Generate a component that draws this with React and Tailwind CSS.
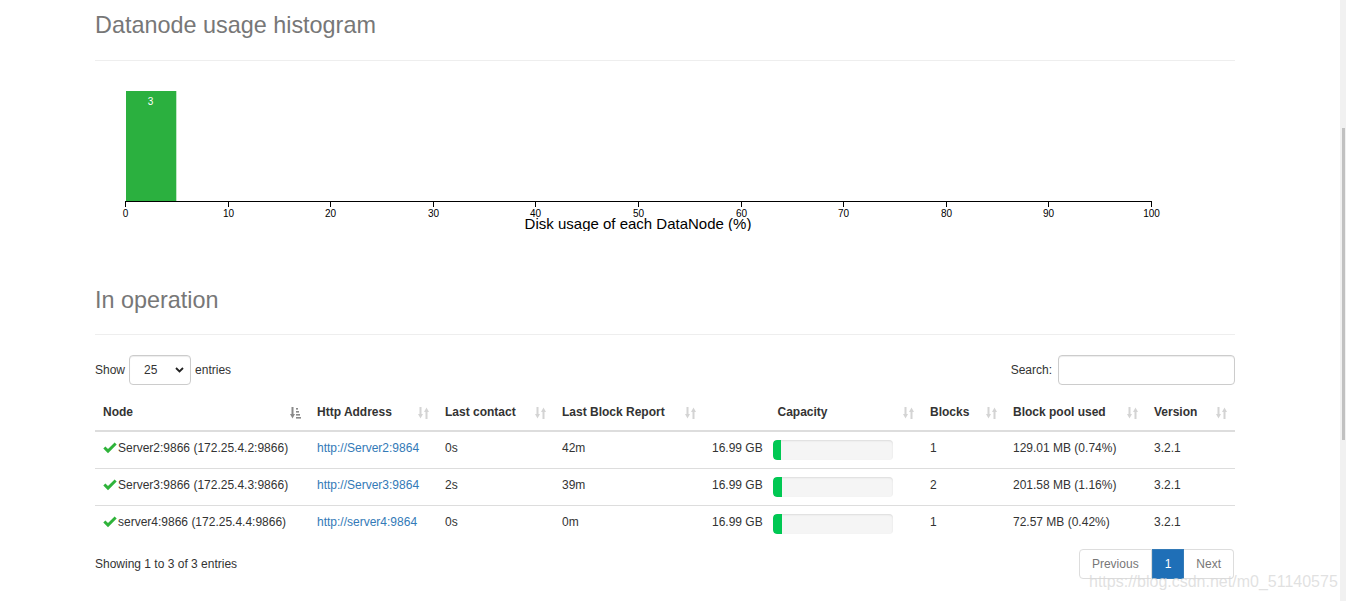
import React from "react";

function SortIcon({ active }) {
  if (active) {
    return (
      <svg width="11" height="12" viewBox="0 0 11 12" className="shrink-0">
        <rect x="1.5" y="0" width="2" height="8" fill="#8a8a8a" />
        <polygon points="0,7 5,7 2.5,11.5" fill="#8a8a8a" />
        <rect x="6" y="1" width="2" height="1.6" fill="#8a8a8a" />
        <rect x="6" y="4" width="3" height="1.6" fill="#8a8a8a" />
        <rect x="6" y="7" width="4" height="1.6" fill="#8a8a8a" />
        <rect x="6" y="10" width="5" height="1.6" fill="#8a8a8a" />
      </svg>
    );
  }
  return (
    <svg width="11" height="12" viewBox="0 0 11 12" className="shrink-0">
      <rect x="1.5" y="0" width="2" height="8" fill="#d4d4d4" />
      <polygon points="0,7 5,7 2.5,11.5" fill="#d4d4d4" />
      <rect x="7.5" y="4" width="2" height="8" fill="#d4d4d4" />
      <polygon points="6,5 11,5 8.5,0.5" fill="#d4d4d4" />
    </svg>
  );
}

function Check() {
  return (
    <svg width="14" height="12" viewBox="0 0 14 12" className="shrink-0 mt-[2px]">
      <path d="M0.3 6.6 L2.4 4.5 L5 7.1 L11.6 0.5 L13.7 2.6 L5 11.3 Z" fill="#2fb33a" />
    </svg>
  );
}

const cols = [
  { name: "Node", w: "w-[214px]", active: true },
  { name: "Http Address", w: "w-[128px]" },
  { name: "Last contact", w: "w-[117px]" },
  { name: "Last Block Report", w: "w-[150px]" },
  { name: "Capacity", w: "w-[218px]", center: true },
  { name: "Blocks", w: "w-[83px]" },
  { name: "Block pool used", w: "w-[141px]" },
  { name: "Version", w: "w-[89px]" },
];

const rows = [
  { node: "Server2:9866 (172.25.4.2:9866)", http: "http://Server2:9864", contact: "0s", report: "42m", fill: 8, blocks: "1", pool: "129.01 MB (0.74%)" },
  { node: "Server3:9866 (172.25.4.3:9866)", http: "http://Server3:9864", contact: "2s", report: "39m", fill: 9, blocks: "2", pool: "201.58 MB (1.16%)" },
  { node: "server4:9866 (172.25.4.4:9866)", http: "http://server4:9864", contact: "0s", report: "0m", fill: 9, blocks: "1", pool: "72.57 MB (0.42%)" },
];

function Histogram() {
  const ticks = [0, 10, 20, 30, 40, 50, 60, 70, 80, 90, 100];
  const x0 = 30;
  const scale = 10.26;
  return (
    <svg width="1140" height="150" className="block">
      <rect x={x0 + 1} y="10" width={5 * scale - 1} height="110" fill="#2bb03f" />
      <text x={x0 + 2.5 * scale} y="24" fontSize="10" fill="#ffffff" textAnchor="middle" fontFamily="Liberation Sans, Arial, sans-serif">3</text>
      <line x1={x0} y1="120.5" x2={x0 + 100 * scale} y2="120.5" stroke="#000" strokeWidth="1" />
      {ticks.map((t) => {
        const x = Math.round(x0 + t * scale) + 0.5;
        return (
          <g key={t}>
            <line x1={x} y1="120" x2={x} y2="126" stroke="#000" strokeWidth="1" />
            <text x={x} y="136" fontSize="10" fill="#000" textAnchor="middle" fontFamily="Liberation Sans, Arial, sans-serif">{t}</text>
          </g>
        );
      })}
      <text x={x0 + 50 * scale} y="148" fontSize="15" fill="#000" textAnchor="middle" fontFamily="Liberation Sans, Arial, sans-serif">Disk usage of each DataNode (%)</text>
    </svg>
  );
}

export default function App() {
  return (
    <div className="relative flex w-[1346px] h-[601px] overflow-hidden bg-white font-['Liberation_Sans',Arial,sans-serif] text-[12px] leading-[17px] text-[#333]">
      <div className="w-[1340px] shrink-0">
        <div className="ml-[95px] w-[1140px]">
          <div className="pb-[9px] border-b border-[#eeeeee] mb-[20px]">
            <h1 className="mt-[1.4px] mb-[10px] text-[36px] leading-[1.1] font-normal">
              <span className="text-[23.4px] text-[#777]">Datanode usage histogram</span>
            </h1>
          </div>
          <Histogram />
          <div className="mt-[44.6px] pb-[9px] border-b border-[#eeeeee] mb-[20px]">
            <h1 className="mb-[10px] text-[36px] leading-[1.1] font-normal">
              <span className="text-[23.4px] text-[#777]">In operation</span>
            </h1>
          </div>
          <div className="flex justify-between items-center h-[30px]">
            <div className="flex items-center">
              <span>Show</span>
              <div className="ml-[4px] flex items-center w-[62px] h-[30px] border border-[#cccccc] rounded-[4px] pl-[14px] pr-[6px] justify-between shadow-[inset_0_1px_1px_rgba(0,0,0,0.075)]">
                <span>25</span>
                <svg width="9" height="6" viewBox="0 0 9 6">
                  <path d="M1 1 L4.5 4.5 L8 1" stroke="#222" strokeWidth="1.8" fill="none" />
                </svg>
              </div>
              <span className="ml-[4px]">entries</span>
            </div>
            <div className="flex items-center">
              <span>Search:</span>
              <div className="ml-[6px] w-[177px] h-[30px] border border-[#cccccc] rounded-[4px] shadow-[inset_0_1px_1px_rgba(0,0,0,0.075)]" />
            </div>
          </div>
          <table className="mt-[11px] w-[1140px] table-fixed border-collapse">
            <thead>
              <tr>
                {cols.map((c) => (
                  <th key={c.name} className={`${c.w} px-[8px] pt-[8px] pb-[9px] text-left font-bold border-b-2 border-[#dddddd] align-bottom`}>
                    <div className="flex items-center">
                      <span className={c.center ? "flex-1 text-center pr-[10px]" : "flex-1"}>{c.name}</span>
                      <SortIcon active={c.active} />
                    </div>
                  </th>
                ))}
              </tr>
            </thead>
            <tbody>
              {rows.map((r, i) => (
                <tr key={i}>
                  <td className={`px-[8px] py-[8px] align-top ${i > 0 ? "border-t border-[#dddddd]" : ""}`}>
                    <div className="flex items-start">
                      <Check />
                      <span className="ml-[1px] whitespace-nowrap">{r.node}</span>
                    </div>
                  </td>
                  <td className={`px-[8px] py-[8px] align-top ${i > 0 ? "border-t border-[#dddddd]" : ""}`}>
                    <span className="text-[#337ab7]">{r.http}</span>
                  </td>
                  <td className={`px-[8px] py-[8px] align-top ${i > 0 ? "border-t border-[#dddddd]" : ""}`}>{r.contact}</td>
                  <td className={`px-[8px] py-[8px] align-top ${i > 0 ? "border-t border-[#dddddd]" : ""}`}>{r.report}</td>
                  <td className={`px-[8px] py-[8px] align-top ${i > 0 ? "border-t border-[#dddddd]" : ""}`}>
                    <div className="flex items-start h-[20px]">
                      <span className="w-[50px] text-right whitespace-nowrap">16.99 GB</span>
                      <div className="ml-[11px] w-[120px] h-[20px] rounded-[4px] bg-[#f5f5f5] shadow-[inset_0_1px_2px_rgba(0,0,0,0.1)] overflow-hidden">
                        <div className="h-full bg-[#00c853] rounded-l-[4px]" style={{ width: r.fill + "px" }} />
                      </div>
                    </div>
                  </td>
                  <td className={`px-[8px] py-[8px] align-top ${i > 0 ? "border-t border-[#dddddd]" : ""}`}>{r.blocks}</td>
                  <td className={`px-[8px] py-[8px] align-top ${i > 0 ? "border-t border-[#dddddd]" : ""}`}>{r.pool}</td>
                  <td className={`px-[8px] py-[8px] align-top ${i > 0 ? "border-t border-[#dddddd]" : ""}`}>3.2.1</td>
                </tr>
              ))}
            </tbody>
          </table>
          <div className="mt-[7px] flex justify-between items-center h-[30px]">
            <span>Showing 1 to 3 of 3 entries</span>
            <div className="flex h-[30px] mr-[1px]">
              <div className="flex items-center px-[12px] border border-[#dddddd] rounded-l-[4px] text-[#777]">Previous</div>
              <div className="flex items-center px-[12px] border border-[#337ab7] bg-[#1f6fb7] text-white">1</div>
              <div className="flex items-center px-[12px] border border-[#dddddd] border-l-0 rounded-r-[4px] text-[#777]">Next</div>
            </div>
          </div>
        </div>
      </div>
      <div className="w-[6px] h-full bg-[#f1f1f1] flex flex-col">
        <div className="h-[128px]" />
        <div className="ml-[1.5px] w-[3px] h-[312px] bg-[#c1c1c1]" />
      </div>
      <div className="absolute left-[1089px] top-[572px] text-[16px] leading-[20px] text-[rgba(215,215,215,0.75)] whitespace-nowrap">
        https://blog.csdn.net/m0_51140575
      </div>
    </div>
  );
}
